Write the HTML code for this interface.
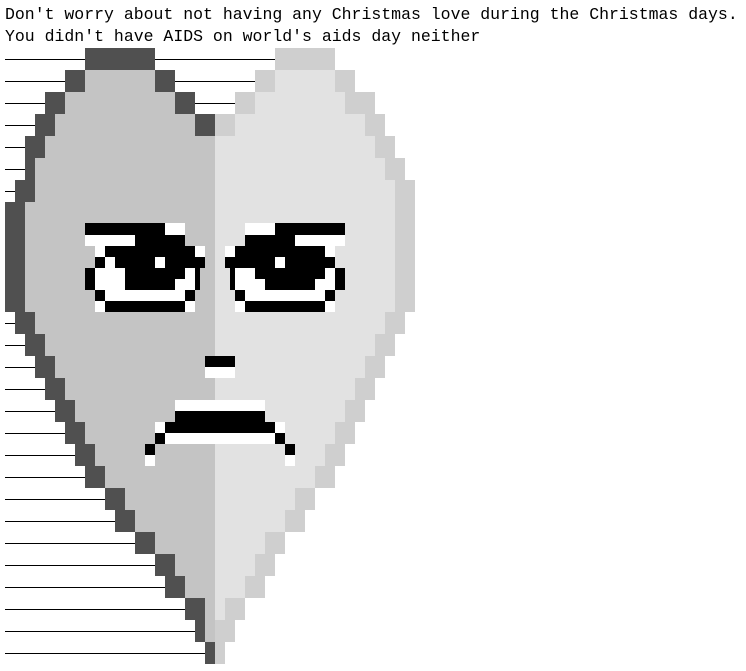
<!DOCTYPE html>
<html><head><meta charset="utf-8"><style>
html,body{margin:0;padding:0;background:#fff;width:746px;height:671px;overflow:hidden}
.t{position:absolute;left:5px;top:4px;font-family:"Liberation Mono",monospace;font-size:16.5px;line-height:22px;color:#000;white-space:pre}
svg{position:absolute;left:0;top:0}
</style></head><body>
<div class="t">Don't worry about not having any Christmas love during the Christmas days.
You didn't have AIDS on world's aids day neither</div>
<svg width="746" height="671" shape-rendering="crispEdges">
<g fill="#000">
<rect x="5" y="59" width="80" height="1"/><rect x="155" y="59" width="120" height="1"/>
<rect x="5" y="81" width="60" height="1"/><rect x="175" y="81" width="80" height="1"/>
<rect x="5" y="103" width="40" height="1"/><rect x="195" y="103" width="40" height="1"/>
<rect x="5" y="125" width="30" height="1"/>
<rect x="5" y="147" width="20" height="1"/>
<rect x="5" y="169" width="20" height="1"/>
<rect x="5" y="191" width="10" height="1"/>
<rect x="5" y="323" width="10" height="1"/>
<rect x="5" y="345" width="20" height="1"/>
<rect x="5" y="367" width="30" height="1"/>
<rect x="5" y="389" width="40" height="1"/>
<rect x="5" y="411" width="50" height="1"/>
<rect x="5" y="433" width="60" height="1"/>
<rect x="5" y="455" width="70" height="1"/>
<rect x="5" y="477" width="80" height="1"/>
<rect x="5" y="499" width="100" height="1"/>
<rect x="5" y="521" width="110" height="1"/>
<rect x="5" y="543" width="130" height="1"/>
<rect x="5" y="565" width="150" height="1"/>
<rect x="5" y="587" width="160" height="1"/>
<rect x="5" y="609" width="180" height="1"/>
<rect x="5" y="631" width="190" height="1"/>
<rect x="5" y="653" width="200" height="1"/>
</g>
<!-- rows 0-2 -->
<rect x="85" y="48" width="70" height="22" fill="#505050"/>
<rect x="275" y="48" width="60" height="22" fill="#cfcfcf"/>
<rect x="65" y="70" width="20" height="22" fill="#505050"/>
<rect x="85" y="70" width="70" height="22" fill="#c4c4c4"/>
<rect x="155" y="70" width="20" height="22" fill="#505050"/>
<rect x="255" y="70" width="100" height="22" fill="#cfcfcf"/>
<rect x="275" y="70" width="60" height="22" fill="#e2e2e2"/>
<rect x="45" y="92" width="20" height="22" fill="#505050"/>
<rect x="65" y="92" width="110" height="22" fill="#c4c4c4"/>
<rect x="175" y="92" width="20" height="22" fill="#505050"/>
<rect x="235" y="92" width="140" height="22" fill="#cfcfcf"/>
<rect x="255" y="92" width="90" height="22" fill="#e2e2e2"/>
<!-- row 3 -->
<rect x="35" y="114" width="20" height="22" fill="#505050"/>
<rect x="55" y="114" width="140" height="22" fill="#c4c4c4"/>
<rect x="195" y="114" width="20" height="22" fill="#505050"/>
<rect x="215" y="114" width="170" height="22" fill="#cfcfcf"/>
<rect x="235" y="114" width="130" height="22" fill="#e2e2e2"/>
<g>
<!-- rows 4-27: dark, medium, light, right border -->
<rect x="25" y="136" width="20" height="22" fill="#505050"/><rect x="45" y="136" width="170" height="22" fill="#c4c4c4"/><rect x="215" y="136" width="160" height="22" fill="#e2e2e2"/><rect x="375" y="136" width="20" height="22" fill="#cfcfcf"/>
<rect x="25" y="158" width="10" height="22" fill="#505050"/><rect x="35" y="158" width="180" height="22" fill="#c4c4c4"/><rect x="215" y="158" width="170" height="22" fill="#e2e2e2"/><rect x="385" y="158" width="20" height="22" fill="#cfcfcf"/>
<rect x="15" y="180" width="20" height="22" fill="#505050"/><rect x="35" y="180" width="180" height="22" fill="#c4c4c4"/><rect x="215" y="180" width="180" height="22" fill="#e2e2e2"/><rect x="395" y="180" width="20" height="22" fill="#cfcfcf"/>
<rect x="5" y="202" width="20" height="110" fill="#505050"/><rect x="25" y="202" width="190" height="110" fill="#c4c4c4"/><rect x="215" y="202" width="180" height="110" fill="#e2e2e2"/><rect x="395" y="202" width="20" height="110" fill="#cfcfcf"/>
<rect x="15" y="312" width="20" height="22" fill="#505050"/><rect x="35" y="312" width="180" height="22" fill="#c4c4c4"/><rect x="215" y="312" width="170" height="22" fill="#e2e2e2"/><rect x="385" y="312" width="20" height="22" fill="#cfcfcf"/>
<rect x="25" y="334" width="20" height="22" fill="#505050"/><rect x="45" y="334" width="170" height="22" fill="#c4c4c4"/><rect x="215" y="334" width="160" height="22" fill="#e2e2e2"/><rect x="375" y="334" width="20" height="22" fill="#cfcfcf"/>
<rect x="35" y="356" width="20" height="22" fill="#505050"/><rect x="55" y="356" width="160" height="22" fill="#c4c4c4"/><rect x="215" y="356" width="150" height="22" fill="#e2e2e2"/><rect x="365" y="356" width="20" height="22" fill="#cfcfcf"/>
<rect x="45" y="378" width="20" height="22" fill="#505050"/><rect x="65" y="378" width="150" height="22" fill="#c4c4c4"/><rect x="215" y="378" width="140" height="22" fill="#e2e2e2"/><rect x="355" y="378" width="20" height="22" fill="#cfcfcf"/>
<rect x="55" y="400" width="20" height="22" fill="#505050"/><rect x="75" y="400" width="140" height="22" fill="#c4c4c4"/><rect x="215" y="400" width="130" height="22" fill="#e2e2e2"/><rect x="345" y="400" width="20" height="22" fill="#cfcfcf"/>
<rect x="65" y="422" width="20" height="22" fill="#505050"/><rect x="85" y="422" width="130" height="22" fill="#c4c4c4"/><rect x="215" y="422" width="120" height="22" fill="#e2e2e2"/><rect x="335" y="422" width="20" height="22" fill="#cfcfcf"/>
<rect x="75" y="444" width="20" height="22" fill="#505050"/><rect x="95" y="444" width="120" height="22" fill="#c4c4c4"/><rect x="215" y="444" width="110" height="22" fill="#e2e2e2"/><rect x="325" y="444" width="20" height="22" fill="#cfcfcf"/>
<rect x="85" y="466" width="20" height="22" fill="#505050"/><rect x="105" y="466" width="110" height="22" fill="#c4c4c4"/><rect x="215" y="466" width="100" height="22" fill="#e2e2e2"/><rect x="315" y="466" width="20" height="22" fill="#cfcfcf"/>
<rect x="105" y="488" width="20" height="22" fill="#505050"/><rect x="125" y="488" width="90" height="22" fill="#c4c4c4"/><rect x="215" y="488" width="80" height="22" fill="#e2e2e2"/><rect x="295" y="488" width="20" height="22" fill="#cfcfcf"/>
<rect x="115" y="510" width="20" height="22" fill="#505050"/><rect x="135" y="510" width="80" height="22" fill="#c4c4c4"/><rect x="215" y="510" width="70" height="22" fill="#e2e2e2"/><rect x="285" y="510" width="20" height="22" fill="#cfcfcf"/>
<rect x="135" y="532" width="20" height="22" fill="#505050"/><rect x="155" y="532" width="60" height="22" fill="#c4c4c4"/><rect x="215" y="532" width="50" height="22" fill="#e2e2e2"/><rect x="265" y="532" width="20" height="22" fill="#cfcfcf"/>
<rect x="155" y="554" width="20" height="22" fill="#505050"/><rect x="175" y="554" width="40" height="22" fill="#c4c4c4"/><rect x="215" y="554" width="40" height="22" fill="#e2e2e2"/><rect x="255" y="554" width="20" height="22" fill="#cfcfcf"/>
<rect x="165" y="576" width="20" height="22" fill="#505050"/><rect x="185" y="576" width="30" height="22" fill="#c4c4c4"/><rect x="215" y="576" width="30" height="22" fill="#e2e2e2"/><rect x="245" y="576" width="20" height="22" fill="#cfcfcf"/>
<rect x="185" y="598" width="20" height="22" fill="#505050"/><rect x="205" y="598" width="10" height="22" fill="#c4c4c4"/><rect x="215" y="598" width="10" height="22" fill="#e2e2e2"/><rect x="225" y="598" width="20" height="22" fill="#cfcfcf"/>
<rect x="195" y="620" width="10" height="22" fill="#505050"/><rect x="205" y="620" width="10" height="22" fill="#c4c4c4"/><rect x="215" y="620" width="20" height="22" fill="#cfcfcf"/>
<rect x="205" y="642" width="10" height="22" fill="#505050"/><rect x="215" y="642" width="10" height="22" fill="#cfcfcf"/>
</g>
<!-- left eye -->
<g>
<rect x="85" y="223" width="80" height="12" fill="#000"/><rect x="165" y="223" width="20" height="12" fill="#fff"/>
<rect x="85" y="235" width="50" height="11" fill="#fff"/><rect x="135" y="235" width="50" height="11" fill="#000"/>
<rect x="95" y="246" width="10" height="11" fill="#fff"/><rect x="105" y="246" width="90" height="11" fill="#000"/><rect x="195" y="246" width="10" height="11" fill="#fff"/>
<rect x="95" y="257" width="10" height="11" fill="#000"/><rect x="105" y="257" width="10" height="11" fill="#fff"/><rect x="115" y="257" width="40" height="11" fill="#000"/><rect x="155" y="257" width="10" height="11" fill="#fff"/><rect x="165" y="257" width="40" height="11" fill="#000"/>
<rect x="85" y="268" width="10" height="22" fill="#000"/><rect x="95" y="268" width="30" height="22" fill="#fff"/><rect x="125" y="268" width="60" height="11" fill="#000"/><rect x="185" y="268" width="10" height="11" fill="#fff"/><rect x="195" y="268" width="5" height="22" fill="#000"/>
<rect x="125" y="279" width="50" height="11" fill="#000"/><rect x="175" y="279" width="20" height="11" fill="#fff"/>
<rect x="95" y="290" width="10" height="11" fill="#000"/><rect x="105" y="290" width="80" height="11" fill="#fff"/><rect x="185" y="290" width="10" height="11" fill="#000"/>
<rect x="95" y="301" width="10" height="11" fill="#fff"/><rect x="105" y="301" width="80" height="11" fill="#000"/><rect x="185" y="301" width="10" height="11" fill="#fff"/>
</g>
<!-- right eye -->
<g>
<rect x="245" y="223" width="30" height="12" fill="#fff"/><rect x="275" y="223" width="70" height="12" fill="#000"/>
<rect x="245" y="235" width="50" height="11" fill="#000"/><rect x="295" y="235" width="50" height="11" fill="#fff"/>
<rect x="225" y="246" width="10" height="11" fill="#fff"/><rect x="235" y="246" width="90" height="11" fill="#000"/><rect x="325" y="246" width="10" height="11" fill="#fff"/>
<rect x="225" y="257" width="50" height="11" fill="#000"/><rect x="275" y="257" width="10" height="11" fill="#fff"/><rect x="285" y="257" width="50" height="11" fill="#000"/>
<rect x="230" y="268" width="5" height="22" fill="#000"/><rect x="235" y="268" width="20" height="11" fill="#fff"/><rect x="255" y="268" width="70" height="11" fill="#000"/><rect x="325" y="268" width="10" height="11" fill="#fff"/><rect x="335" y="268" width="10" height="22" fill="#000"/>
<rect x="235" y="279" width="30" height="11" fill="#fff"/><rect x="265" y="279" width="50" height="11" fill="#000"/><rect x="315" y="279" width="20" height="11" fill="#fff"/>
<rect x="235" y="290" width="10" height="11" fill="#000"/><rect x="245" y="290" width="80" height="11" fill="#fff"/><rect x="325" y="290" width="10" height="11" fill="#000"/>
<rect x="235" y="301" width="10" height="11" fill="#fff"/><rect x="245" y="301" width="80" height="11" fill="#000"/><rect x="325" y="301" width="10" height="11" fill="#fff"/>
</g>
<!-- nose -->
<rect x="205" y="356" width="30" height="11" fill="#000"/><rect x="205" y="367" width="30" height="11" fill="#fff"/>
<!-- mouth -->
<g>
<rect x="175" y="400" width="90" height="11" fill="#fff"/>
<rect x="175" y="411" width="90" height="11" fill="#000"/>
<rect x="155" y="422" width="10" height="11" fill="#fff"/><rect x="165" y="422" width="110" height="11" fill="#000"/><rect x="275" y="422" width="10" height="11" fill="#fff"/>
<rect x="155" y="433" width="10" height="11" fill="#000"/><rect x="165" y="433" width="110" height="11" fill="#fff"/><rect x="275" y="433" width="10" height="11" fill="#000"/>
<rect x="145" y="444" width="10" height="11" fill="#000"/><rect x="285" y="444" width="10" height="11" fill="#000"/>
<rect x="145" y="455" width="10" height="11" fill="#fff"/><rect x="285" y="455" width="10" height="11" fill="#fff"/>
</g>
</svg>
</body></html>
